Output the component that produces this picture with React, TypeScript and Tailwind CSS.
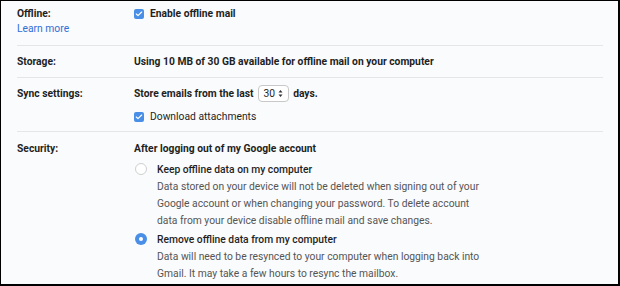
import { Check } from 'lucide-react';

function Checkbox() {
    return (
        <span className="flex items-center justify-center w-[10px] h-[10px] rounded-[2px] bg-[#4a8fe7] shrink-0">
            <Check size={8} strokeWidth={3.5} color="white" />
        </span>
    );
}

function Radio({ checked }: { checked: boolean }) {
    return checked ? (
        <span className="flex items-center justify-center w-[12px] h-[12px] rounded-full bg-[#4a8fe7] shrink-0">
            <span className="w-[4px] h-[4px] rounded-full bg-white" />
        </span>
    ) : (
        <span className="block w-[12px] h-[12px] rounded-full border border-[#cfcfcf] bg-white shrink-0" />
    );
}

export default function App() {
    return (
        <div
            className="w-[620px] h-[286px] bg-[#fafbfc] border-t border-l border-r-2 border-b-2 border-black overflow-hidden text-[10.3px] leading-[17px] text-[#1f1f1f]"
            style={{ fontFamily: 'Roboto, "Liberation Sans", sans-serif' }}
        >
            <div className="pl-[16px] pr-[15px]">
                <div className="flex pt-[4px] pb-[8px] border-b border-[#e6e6e6]">
                    <div className="w-[117px]">
                        <div className="font-bold">Offline:</div>
                        <div className="text-[#2f6fd6] mt-[-2px]">Learn more</div>
                    </div>
                    <div className="flex items-center gap-[6px] h-[17px] font-bold">
                        <Checkbox />
                        <span>Enable offline mail</span>
                    </div>
                </div>

                <div className="flex pt-[7px] pb-[7px] border-b border-[#e6e6e6]">
                    <div className="w-[117px] font-bold">Storage:</div>
                    <div className="font-bold">Using 10 MB of 30 GB available for offline mail on your computer</div>
                </div>

                <div className="flex pt-[7px] pb-[6px] border-b border-[#e6e6e6]">
                    <div className="w-[117px] font-bold">Sync settings:</div>
                    <div>
                        <div className="flex items-center font-bold">
                            <span>Store emails from the last</span>
                            <span className="flex items-center gap-[3px] mx-[4px] h-[17px] px-[5px] border border-[#c8c8c8] rounded-[4px] bg-white font-normal">
                                30
                                <svg width="5" height="9" viewBox="0 0 5 9">
                                    <path d="M0.5 3.5 L2.5 1 L4.5 3.5Z M0.5 5.5 L2.5 8 L4.5 5.5Z" fill="#333" />
                                </svg>
                            </span>
                            <span>days.</span>
                        </div>
                        <div className="flex items-center gap-[6px] mt-[6px]">
                            <Checkbox />
                            <span>Download attachments</span>
                        </div>
                    </div>
                </div>

                <div className="flex pt-[8px]">
                    <div className="w-[117px] font-bold">Security:</div>
                    <div>
                        <div className="font-bold">After logging out of my Google account</div>
                        <div className="flex gap-[10px] mt-[4px] pl-[1px]">
                            <div className="pt-[2px]">
                                <Radio checked={false} />
                            </div>
                            <div>
                                <div className="font-medium">Keep offline data on my computer</div>
                                <div className="text-[#555]">
                                    Data stored on your device will not be deleted when signing out of your
                                    <br />
                                    Google account or when changing your password. To delete account
                                    <br />
                                    data from your device disable offline mail and save changes.
                                </div>
                            </div>
                        </div>
                        <div className="flex gap-[10px] mt-[2px] pl-[1px]">
                            <div className="pt-[2px]">
                                <Radio checked={true} />
                            </div>
                            <div>
                                <div className="font-medium">Remove offline data from my computer</div>
                                <div className="text-[#555]">
                                    Data will need to be resynced to your computer when logging back into
                                    <br />
                                    Gmail. It may take a few hours to resync the mailbox.
                                </div>
                            </div>
                        </div>
                    </div>
                </div>
            </div>
        </div>
    );
}
